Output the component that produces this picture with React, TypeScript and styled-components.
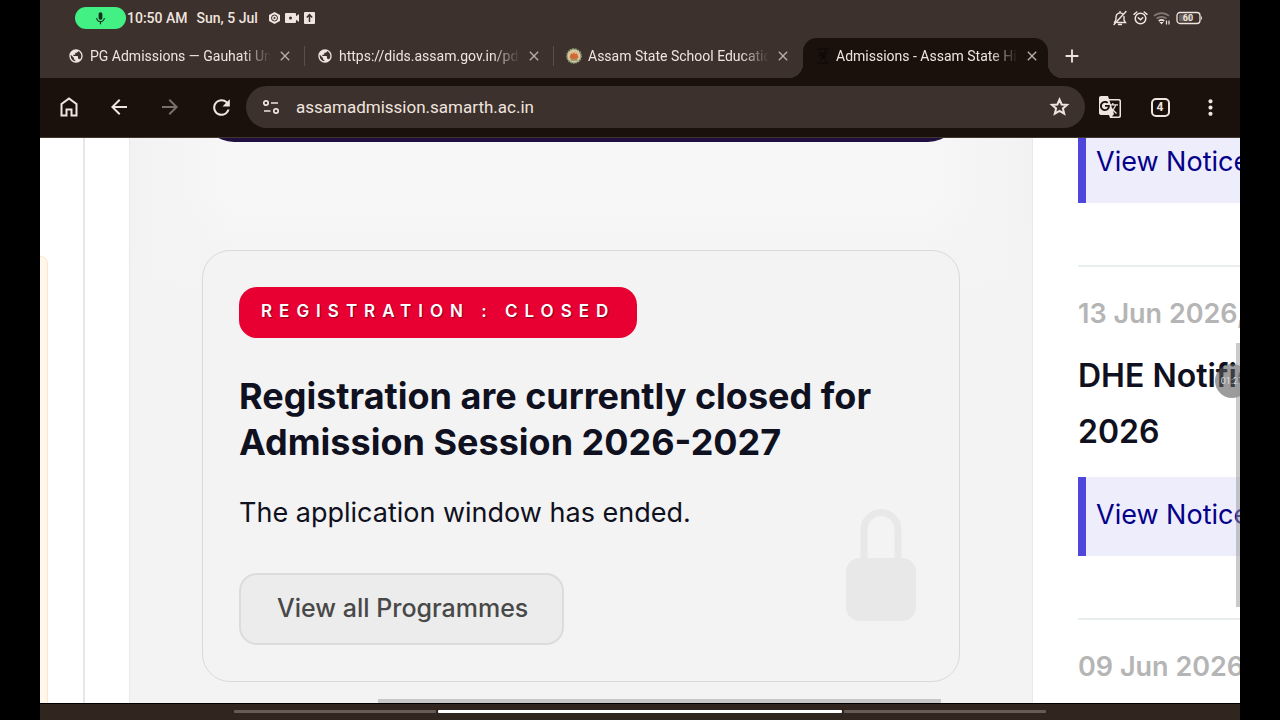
import React from "react";
import styled, { createGlobalStyle, css } from "styled-components";
import {
  MdPublic, MdClose, MdArrowBack, MdArrowForward, MdRefresh,
  MdGTranslate, MdMoreVert, MdAdd, MdMic,
} from "react-icons/md";

const color = {
  bar: "#3c312d",
  dark: "#1a110c",
  light: "#f0e4df",
  dim: "#b9aea9",
  panel: "#f3f3f3",
  line: "#e6e6e6",
  ink: "#0f1020",
  link: "#05008a",
  indigo: "#5046dc",
};

const GlobalStyle = createGlobalStyle`
  *, *::before, *::after { box-sizing: border-box; }
  body { margin: 0; background: #000; }
  button { border: 0; padding: 0; background: none; color: inherit; font: inherit; }
  h2, h3, p { margin: 0; }
`;

const Screen = styled.div`
  height: 100vh;
  margin: 0 40px;
  display: flex;
  flex-direction: column;
  overflow: hidden;
  font-family: Inter, "Liberation Sans", sans-serif;
`;

const StatusBar = styled.header`
  flex: none;
  height: 38px;
  padding: 0 37px 2px 35px;
  display: flex;
  align-items: center;
  background: ${color.bar};
  color: ${color.light};
  font: 500 14px/20px Roboto, sans-serif;
`;

const MicPill = styled.span`
  width: 51px;
  height: 22px;
  margin-right: 1px;
  display: grid;
  place-items: center;
  border-radius: 11px;
  background: #42f083;
  color: #14301c;
`;

const StatusDate = styled.span`
  margin: 0 10px 0 9px;
`;

const StatusIcons = styled.span`
  display: flex;
  align-items: center;
  gap: 4px;
`;

const StatusEnd = styled(StatusIcons)`
  gap: 5px;
  margin-left: auto;
`;

const TabStrip = styled.div`
  flex: none;
  height: 40px;
  padding-left: 15px;
  display: flex;
  background: ${color.bar};
  color: ${color.light};
  font: 400 14px/20px Roboto, sans-serif;
`;

const Tab = styled.div<{ $active?: boolean; $divided?: boolean }>`
  position: relative;
  flex: 0 1 249px;
  min-width: 0;
  padding: 0 11px 4px 13px;
  display: flex;
  align-items: center;

  ${(p) => p.$divided && css`
    &::after {
      content: "";
      position: absolute;
      right: -1px;
      top: 8px;
      width: 1px;
      height: 20px;
      background: #5a4e49;
    }
  `}

  ${(p) => p.$active && css`
    flex-basis: 245px;
    margin-left: 1px;
    padding-right: 8px;
    border-radius: 14px 14px 0 0;
    background: ${color.dark};
    &::before, &::after {
      content: "";
      position: absolute;
      bottom: 0;
      width: 14px;
      height: 14px;
    }
    &::before {
      right: 100%;
      background: radial-gradient(circle at 0 0, transparent 14px, ${color.dark} 14px);
    }
    &::after {
      left: 100%;
      background: radial-gradient(circle at 100% 0, transparent 14px, ${color.dark} 14px);
    }
  `}
`;

const TabLabel = styled.button`
  flex: 1;
  min-width: 0;
  display: flex;
  align-items: center;
  gap: 6px;
`;

const TabTitle = styled.span`
  flex: 1;
  overflow: hidden;
  white-space: nowrap;
  text-align: left;
  mask-image: linear-gradient(to right, #000 calc(100% - 28px), transparent);
`;

const TabClose = styled.button`
  width: 16px;
  height: 16px;
  margin-left: 6px;
  display: grid;
  place-items: center;
  color: ${color.dim};
`;

const NewTab = styled.button`
  width: 48px;
  padding-bottom: 4px;
  display: grid;
  place-items: center;
`;

const Toolbar = styled.div`
  flex: none;
  height: 60px;
  padding: 0 5px 1px 3px;
  display: flex;
  align-items: center;
  border-bottom: 1px solid #40362f;
  background: ${color.dark};
  color: ${color.light};
`;

const ToolGroup = styled.div<{ $gap?: number }>`
  display: flex;
  gap: ${(p) => p.$gap ?? 0}px;
`;

const ToolButton = styled.button<{ $off?: boolean }>`
  width: 50px;
  height: 42px;
  display: grid;
  place-items: center;
  opacity: ${(p) => (p.$off ? 0.45 : 1)};
`;

const AddressBar = styled.div`
  flex: 1;
  min-width: 0;
  height: 42px;
  display: flex;
  align-items: center;
  border-radius: 21px;
  background: ${color.bar};
`;

const AddressInput = styled.input`
  flex: 1;
  min-width: 0;
  padding: 0;
  border: 0;
  outline: 0;
  background: none;
  color: ${color.light};
  font: 400 17px/24px Roboto, sans-serif;
`;

const TabCount = styled.span`
  width: 19px;
  height: 19px;
  display: grid;
  place-items: center;
  border: 2px solid ${color.light};
  border-radius: 5px;
  font: 700 12px/15px Roboto, sans-serif;
`;

const Page = styled.main`
  position: relative;
  flex: 1;
  min-height: 0;
  display: flex;
  overflow: hidden;
  background: #fff;
`;

const LeftRail = styled.aside`
  flex: none;
  width: 45px;
  padding-top: 118px;
  border-right: 2px solid ${color.line};
`;

const PeekCard = styled.div`
  width: 8px;
  height: 100%;
  border: solid #fde6cc;
  border-width: 1px 1px 0 0;
  border-radius: 0 14px 0 0;
  background: #fff7ec;
`;

const Panel = styled.section`
  flex: 1;
  min-width: 0;
  margin-left: 44px;
  padding: 0 72px;
  border: solid #e9e9e9;
  border-width: 0 1px;
  background:
    linear-gradient(to bottom, transparent 60px, ${color.panel} 150px),
    linear-gradient(to right, #f2f2f2, #f7f7f7 110px, #f7f7f7 calc(100% - 110px), #f2f2f2);
`;

const Banner = styled.div`
  height: 64px;
  margin-top: -60px;
  border-radius: 36px;
  background: #1f1040;
`;

const Card = styled.article`
  position: relative;
  height: 432px;
  margin-top: 108px;
  padding: 36px;
  border: 1px solid #d9d9d9;
  border-radius: 28px;
  background: ${color.panel};
`;

const Badge = styled.p`
  width: fit-content;
  padding: 0 22px 2px 22px;
  border-radius: 18px;
  background: #e80032;
  color: #fff;
  font-size: 17px;
  font-weight: 600;
  line-height: 49px;
  letter-spacing: 7px;
  text-shadow: 1px 1px 1px rgba(60, 0, 20, 0.6);
`;

const CardTitle = styled.h2`
  max-width: 660px;
  margin-top: 35px;
  color: ${color.ink};
  font-size: 36px;
  font-weight: 700;
  line-height: 46px;
`;

const CardText = styled.p`
  margin-top: 28px;
  color: ${color.ink};
  font-size: 27px;
  line-height: 40px;
`;

const ProgrammesButton = styled.button`
  height: 72px;
  margin-top: 40px;
  padding: 0 34px 2px 36px;
  border: 2px solid #dcdcdc;
  border-radius: 18px;
  background: #ececec;
  color: #484848;
  font-size: 25px;
  font-weight: 500;
`;

const Lock = styled.svg`
  position: absolute;
  right: 43px;
  bottom: 60px;
`;

const HorizontalThumb = styled.div`
  position: absolute;
  left: 338px;
  right: 299px;
  bottom: 0;
  height: 4px;
  background: #c8c8c8;
`;

const VerticalThumb = styled.div`
  position: absolute;
  right: 0;
  top: 205px;
  width: 4px;
  height: 264px;
  background: rgba(150, 150, 150, 0.5);
`;

const TimerBubble = styled.div`
  position: absolute;
  right: -9px;
  top: 226px;
  width: 34px;
  height: 34px;
  border-radius: 17px;
  background: rgba(90, 90, 90, 0.6);
  color: #ddd;
  font: 400 9px/34px Roboto, sans-serif;
  text-align: center;
`;

const Notices = styled.aside`
  flex: none;
  width: 207px;
  margin-top: -14px;
  padding-left: 45px;
  white-space: nowrap;
`;

const Notice = styled.article`
  padding-bottom: 62px;
  border-bottom: 2px solid #e9eeee;
  margin-bottom: 27px;
`;

const NoticeDate = styled.p`
  color: #b5b5b5;
  font-size: 27px;
  font-weight: 600;
  line-height: 40px;
`;

const NoticeTitle = styled.h3`
  margin: 14px 0 17px;
  color: ${color.ink};
  font-size: 32px;
  font-weight: 600;
  line-height: 56px;
`;

const NoticeLink = styled.a`
  display: block;
  padding: 18px 0 21px 10px;
  border-left: 8px solid ${color.indigo};
  background: #ededfc;
  color: ${color.link};
  font-size: 27px;
  line-height: 40px;
  text-decoration: none;
`;

const GestureBar = styled.footer`
  flex: none;
  height: 17px;
  padding-bottom: 1px;
  display: flex;
  align-items: center;
  justify-content: center;
  gap: 2px;
  border-top: 1px solid #000;
  background: #30261f;
`;

const GestureSegment = styled.span<{ $main?: boolean }>`
  flex: 0 1 ${(p) => (p.$main ? 404 : 202)}px;
  height: 3px;
  border-radius: 1px;
  background: ${(p) => (p.$main ? "#fff" : "#675c54")};
`;

const Emblem = () => (
  <svg width="16" height="16" viewBox="0 0 16 16" aria-hidden="true">
    <circle cx="8" cy="8" r="7" fill="#d8cfa6" stroke="#8c9a78" strokeWidth="1.800" strokeDasharray="1.600 1" />
    <circle cx="8" cy="8" r="4.800" fill="#e3b88a" />
    <path d="M3.500 9.500 5 5.500l2 .5 1-2 1 2 2-.5 1.500 4-2 1.500h-5z" fill="#cf6a38" />
    <path d="M4.500 12h7" stroke="#5d7048" />
  </svg>
);

const DarkSeal = () => (
  <svg width="14" height="16" viewBox="0 0 14 16" fill="none" stroke="#0d0706" strokeWidth="1.200" aria-hidden="true">
    <path d="M1 1h12M3 4l3 2 5-3M2 8l4-1 4 2M4 12l3-4 3 5M1 15h12M10 5l-3 6" />
  </svg>
);

const BellOff = () => (
  <svg width="16" height="16" viewBox="0 0 16 16" fill="none" stroke="currentColor" strokeWidth="1.400" strokeLinecap="round" aria-hidden="true">
    <path d="M4 9V7a4 4 0 0 1 6.500-3.200M12 6.500V10l1.500 2.500H5.500M4 9.500 2.500 12.500M6.500 14.500h3M8 1.500v1M14 1.500 2 14.500" />
  </svg>
);

const Alarm = () => (
  <svg width="15" height="16" viewBox="0 0 15 16" fill="none" stroke="currentColor" strokeWidth="1.500" strokeLinecap="round" aria-hidden="true">
    <circle cx="7.500" cy="8.500" r="5.300" />
    <path d="M1 4.300 3.800 2M14 4.300 11.200 2M5.300 7.800l2.200 2 2.200-2" />
  </svg>
);

const Wifi = () => (
  <svg width="18" height="16" viewBox="0 0 18 16" fill="none" stroke="currentColor" strokeWidth="1.700" aria-hidden="true">
    <path d="M1 6a11 11 0 0 1 15 0" opacity=".4" />
    <path d="M3.500 8.700a7.500 7.500 0 0 1 10 0" opacity=".4" />
    <path d="M5.800 11a4.500 4.500 0 0 1 5.400 0" />
    <path d="m6.500 12 2 2.500 2-2.500z" fill="currentColor" stroke="none" />
    <path d="M13.500 10.500v4M16 10.500v4" strokeWidth="1.200" />
  </svg>
);

const Battery = () => (
  <svg width="27" height="14" viewBox="0 0 27 14" aria-hidden="true">
    <rect x="1" y="1.500" width="23" height="11" rx="3" fill="none" stroke="currentColor" strokeWidth="1.300" />
    <rect x="3" y="3.500" width="12" height="7" rx="1" fill="#6a5e59" />
    <path d="M25 5v4c1.300-.5 1.300-3.500 0-4z" fill="currentColor" />
    <text x="12" y="10" textAnchor="middle" fill="currentColor" fontSize="9" fontWeight="700" fontFamily="Roboto, sans-serif">60</text>
  </svg>
);

const Home = () => (
  <svg width="24" height="24" viewBox="0 0 24 24" fill="currentColor" aria-hidden="true">
    <path d="M6.500 19.500h3v-6h7v6h3V9.500L13 4.700 6.500 9.500zM4.500 21.500v-13L13 2.200l8.500 6.300v13h-7v-6h-3v6z" />
  </svg>
);

const Star = () => (
  <svg width="24" height="24" viewBox="0 0 24 24" fill="none" stroke="currentColor" strokeWidth="2" aria-hidden="true">
    <path d="m11.500 4.500 2.100 5 5.400.4-4.100 3.500 1.300 5.300-4.700-2.800-4.700 2.800 1.300-5.300L4 9.900l5.400-.4z" />
  </svg>
);

const SiteControls = () => (
  <svg width="18" height="16" viewBox="0 0 18 16" fill="none" stroke="currentColor" strokeWidth="1.700" aria-hidden="true">
    <circle cx="4" cy="4" r="2.200" />
    <path d="M9 4h7M2 12h6.500" />
    <circle cx="14" cy="12" r="2.200" />
  </svg>
);

const tabs = [
  { title: "PG Admissions — Gauhati University", icon: <MdPublic size={16} />, divided: true },
  { title: "https://dids.assam.gov.in/pdf", icon: <MdPublic size={16} />, divided: true },
  { title: "Assam State School Education", icon: <Emblem /> },
  { title: "Admissions - Assam State Higher", icon: <DarkSeal />, active: true },
];

export default function App() {
  return (
    <>
      <GlobalStyle />
      <Screen>
        <StatusBar>
          <MicPill><MdMic size={15} /></MicPill>
          <span>10:50 AM</span>
          <StatusDate>Sun, 5 Jul</StatusDate>
          <StatusIcons>
            <svg width="13" height="14" viewBox="0 0 13 14" aria-hidden="true">
              <path d="M6.500 1 12 4v6l-5.500 3L1 10V4z" fill="currentColor" />
              <circle cx="6.500" cy="7" r="3" fill="none" stroke={color.bar} />
              <path d="m5.700 5.500 2.300 1.500-2.300 1.500z" fill={color.bar} />
            </svg>
            <svg width="15" height="12" viewBox="0 0 15 12" aria-hidden="true">
              <rect y="1" width="11" height="10" rx="1" fill="currentColor" />
              <path d="m10 5 4-3v8l-4-3z" fill="currentColor" />
              <circle cx="5.500" cy="6" r="1.500" fill={color.bar} />
            </svg>
            <svg width="12" height="12" viewBox="0 0 12 12" aria-hidden="true">
              <rect width="11" height="12" rx="1" fill="currentColor" />
              <path d="M5.500 10V3M2.800 5.500 5.500 2.700l2.700 2.800" fill="none" stroke={color.bar} strokeWidth="1.500" />
            </svg>
          </StatusIcons>
          <StatusEnd>
            <BellOff />
            <Alarm />
            <Wifi />
            <Battery />
          </StatusEnd>
        </StatusBar>

        <TabStrip role="tablist" aria-label="Open tabs">
          {tabs.map((t) => (
            <Tab key={t.title} $active={t.active} $divided={t.divided}>
              <TabLabel role="tab" aria-selected={!!t.active}>
                {t.icon}
                <TabTitle>{t.title}</TabTitle>
              </TabLabel>
              <TabClose aria-label="Close tab"><MdClose size={16} /></TabClose>
            </Tab>
          ))}
          <NewTab aria-label="New tab"><MdAdd size={22} /></NewTab>
        </TabStrip>

        <Toolbar>
          <ToolGroup $gap={1}>
            <ToolButton aria-label="Home"><Home /></ToolButton>
            <ToolButton aria-label="Back"><MdArrowBack size={24} /></ToolButton>
            <ToolButton aria-label="Forward" $off><MdArrowForward size={24} /></ToolButton>
            <ToolButton aria-label="Reload"><MdRefresh size={25} /></ToolButton>
          </ToolGroup>
          <AddressBar>
            <ToolButton aria-label="Site controls"><SiteControls /></ToolButton>
            <AddressInput aria-label="Address" defaultValue="assamadmission.samarth.ac.in" />
            <ToolButton aria-label="Bookmark"><Star /></ToolButton>
          </AddressBar>
          <ToolGroup>
            <ToolButton aria-label="Translate"><MdGTranslate size={24} /></ToolButton>
            <ToolButton aria-label="Switch tabs"><TabCount>4</TabCount></ToolButton>
            <ToolButton aria-label="Menu"><MdMoreVert size={25} /></ToolButton>
          </ToolGroup>
        </Toolbar>

        <Page>
          <LeftRail><PeekCard /></LeftRail>
          <Panel>
            <Banner />
            <Card>
              <Badge>REGISTRATION : CLOSED</Badge>
              <CardTitle>Registration are currently closed for Admission Session 2026-2027</CardTitle>
              <CardText>The application window has ended.</CardText>
              <ProgrammesButton>View all Programmes</ProgrammesButton>
              <Lock width="70" height="112" viewBox="0 0 70 112" aria-hidden="true">
                <rect y="49" width="70" height="63" rx="14" fill="#e8e8e8" />
                <path d="M18 50V20.500a17 17 0 0 1 34 0V50" fill="none" stroke="#e8e8e8" strokeWidth="7" />
              </Lock>
            </Card>
          </Panel>
          <Notices>
            <Notice>
              <NoticeLink href="#notice-1">View Notice</NoticeLink>
            </Notice>
            <Notice>
              <NoticeDate>13 Jun 2026,</NoticeDate>
              <NoticeTitle>DHE Notification<br />2026</NoticeTitle>
              <NoticeLink href="#notice-2">View Notice</NoticeLink>
            </Notice>
            <Notice>
              <NoticeDate>09 Jun 2026,</NoticeDate>
            </Notice>
          </Notices>
          <TimerBubble>01:27</TimerBubble>
          <VerticalThumb />
          <HorizontalThumb />
        </Page>

        <GestureBar>
          <GestureSegment />
          <GestureSegment $main />
          <GestureSegment />
        </GestureBar>
      </Screen>
    </>
  );
}
